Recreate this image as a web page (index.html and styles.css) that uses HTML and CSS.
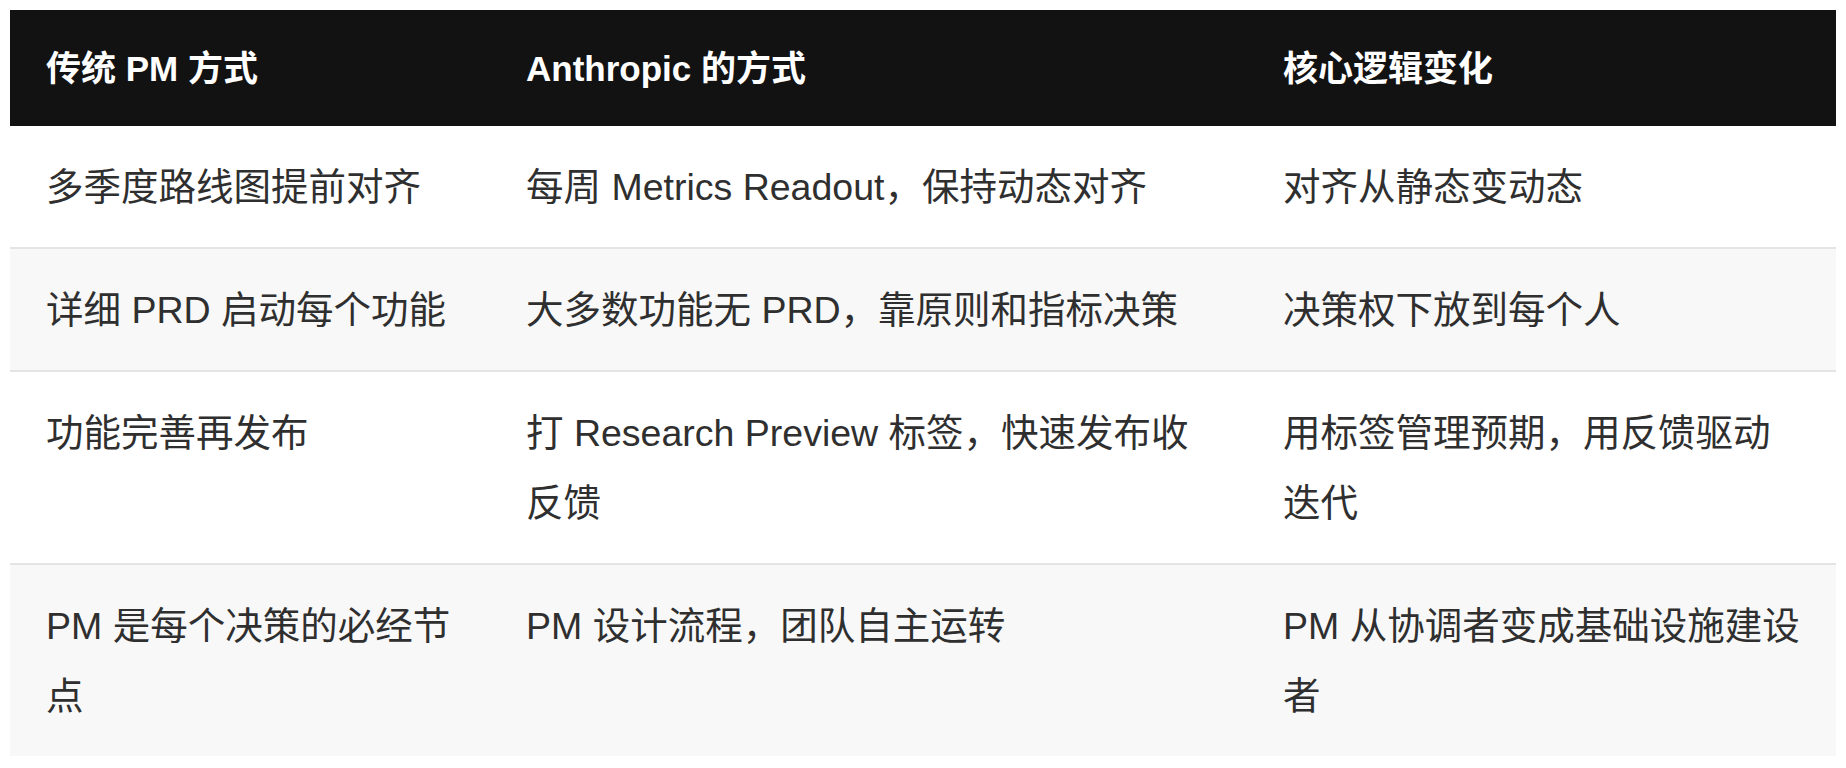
FILE: index.html
```html
<!DOCTYPE html>
<html lang="zh-CN">
<head>
<meta charset="utf-8">
<title>PM 方式对比</title>
<link rel="stylesheet" href="styles.css">
</head>
<body>
<div class="page">
  <table class="compare">
    <colgroup>
      <col class="c1">
      <col class="c2">
      <col class="c3">
    </colgroup>
    <thead>
      <tr>
        <th>传统 PM 方式</th>
        <th>Anthropic 的方式</th>
        <th>核心逻辑变化</th>
      </tr>
    </thead>
    <tbody>
      <tr>
        <td>多季度路线图提前对齐</td>
        <td>每周 Metrics Readout，保持动态对齐</td>
        <td>对齐从静态变动态</td>
      </tr>
      <tr class="alt">
        <td>详细 PRD 启动每个功能</td>
        <td>大多数功能无 PRD，靠原则和指标决策</td>
        <td>决策权下放到每个人</td>
      </tr>
      <tr>
        <td>功能完善再发布</td>
        <td>打 Research Preview 标签，快速发布收反馈</td>
        <td>用标签管理预期，用反馈驱动迭代</td>
      </tr>
      <tr class="alt">
        <td>PM 是每个决策的必经节点</td>
        <td>PM 设计流程，团队自主运转</td>
        <td>PM 从协调者变成基础设施建设者</td>
      </tr>
    </tbody>
  </table>
</div>
</body>
</html>
```

FILE: styles.css
```css
html, body {
  margin: 0;
  padding: 0;
  background: #ffffff;
}

.page {
  padding: 10px;
}

.compare {
  width: 100%;
  border-collapse: collapse;
  table-layout: fixed;
  font-family: "Liberation Sans", "Noto Sans CJK SC", sans-serif;
  color: #2f2f2f;
}

.c1 { width: 480px; }
.c2 { width: 757px; }
.c3 { width: auto; }

.compare th {
  background: #121212;
  color: #ffffff;
  font-weight: 700;
  font-size: 35px;
  line-height: 65px;
  text-align: left;
  padding: 25.5px 36px;
  vertical-align: top;
}

.compare td {
  font-size: 37.5px;
  line-height: 70px;
  padding: 25.5px 36px;
  vertical-align: top;
  text-align: left;
}

.compare tbody tr {
  border-bottom: 2px solid #e4e4e4;
}

.compare tbody tr:last-child {
  border-bottom: none;
}

.compare tbody tr.alt {
  background: #f8f8f8;
}
```
